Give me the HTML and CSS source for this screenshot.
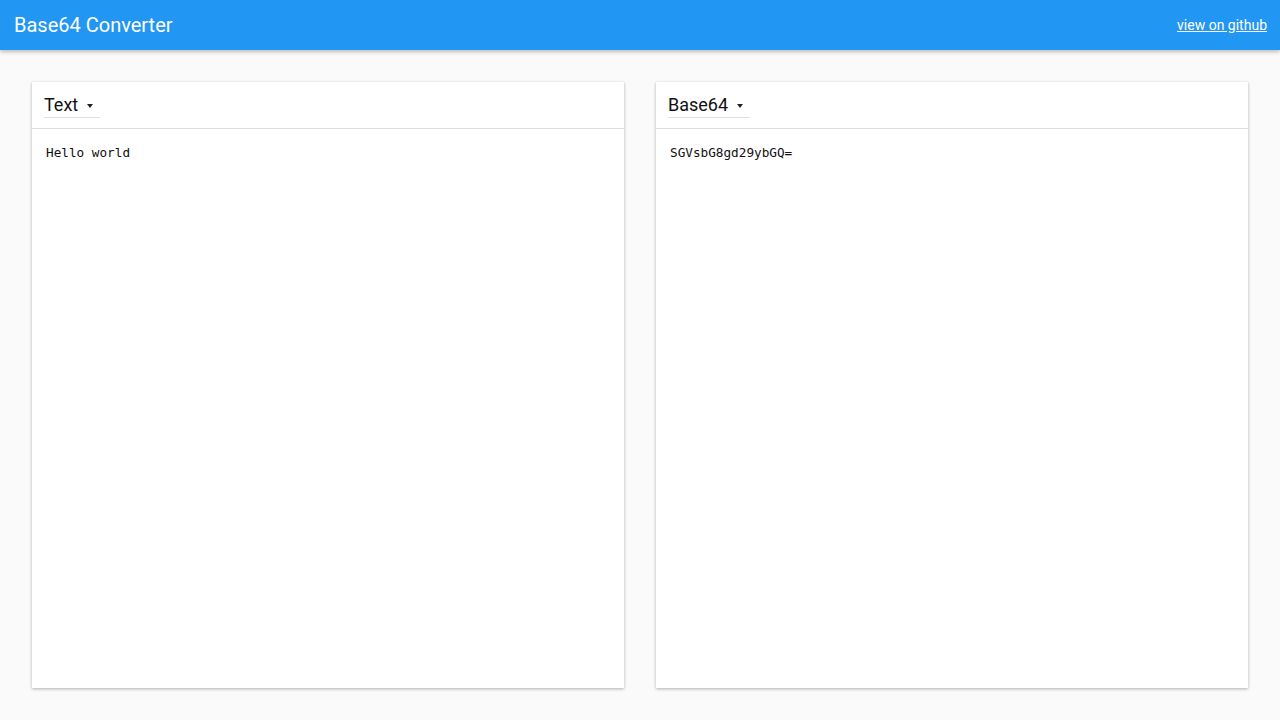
FILE: index.html
```html
<!DOCTYPE html>
<html lang="en">

<head>
    <meta charset="UTF-8">
    <meta name="viewport" content="width=device-width, initial-scale=1.0">
    <title>Base64 Converter</title>

    <link rel="stylesheet" href="styles.css">
</head>

<body>
    <header class="topbar">
        <h1 class="topbar-title">Base64 Converter</h1>
        <a class="topbar-link" href="#">view on github</a>
    </header>

    <main class="panels">
        <section class="panel">
            <div class="panel-head">
                <button class="picker" type="button">
                    <span class="picker-label">Text</span>
                    <span class="picker-arrow"></span>
                </button>
            </div>
            <textarea class="panel-input" spellcheck="false">Hello world</textarea>
        </section>

        <section class="panel">
            <div class="panel-head">
                <button class="picker" type="button">
                    <span class="picker-label">Base64</span>
                    <span class="picker-arrow"></span>
                </button>
            </div>
            <textarea class="panel-input" spellcheck="false">SGVsbG8gd29ybGQ=</textarea>
        </section>
    </main>
</body>

</html>
```

FILE: styles.css
```css
html,
body {
    margin: 0;
    height: 100%;
}

body {
    font-family: Roboto, 'Liberation Sans', sans-serif;
    background-color: #fafafa;
    display: flex;
    flex-direction: column;
}

.topbar {
    height: 50px;
    flex: none;
    background-color: #2196f3;
    color: #ffffff;
    display: flex;
    align-items: center;
    justify-content: space-between;
    padding: 0 13px 0 14px;
    box-shadow: 0 2px 4px rgba(0, 0, 0, 0.25);
    position: relative;
    z-index: 1;
}

.topbar-title {
    margin: 0;
    font-size: 20px;
    font-weight: 400;
}

.topbar-link {
    color: #ffffff;
    font-size: 14px;
    text-decoration: underline;
}

.panels {
    flex: 1;
    display: grid;
    grid-template-columns: 1fr 1fr;
    gap: 32px;
    padding: 32px;
    min-height: 0;
}

.panel {
    background-color: #ffffff;
    display: flex;
    flex-direction: column;
    box-shadow: 0 1px 3px rgba(0, 0, 0, 0.3);
}

.panel-head {
    height: 47px;
    box-sizing: border-box;
    border-bottom: 1px solid #dddddd;
    padding: 11px 12px 0;
    display: flex;
    align-items: flex-start;
}

.picker {
    display: inline-flex;
    align-items: center;
    gap: 9px;
    border: none;
    border-bottom: 1px solid #e0e0e0;
    background: transparent;
    padding: 1px 7px 2px 0;
    margin: 0;
    font-family: Roboto, 'Liberation Sans', sans-serif;
    font-size: 18px;
    color: #111111;
    cursor: pointer;
}

.picker-arrow {
    width: 0;
    height: 0;
    margin-top: 3px;
    border-left: 3px solid transparent;
    border-right: 3px solid transparent;
    border-top: 4px solid #222222;
}

.panel-input {
    flex: 1;
    border: none;
    outline: none;
    resize: none;
    padding: 15px 14px;
    font-family: 'DejaVu Sans Mono', 'Liberation Mono', monospace;
    font-size: 12.7px;
    line-height: 18px;
    color: #111111;
    background: transparent;
}
```
